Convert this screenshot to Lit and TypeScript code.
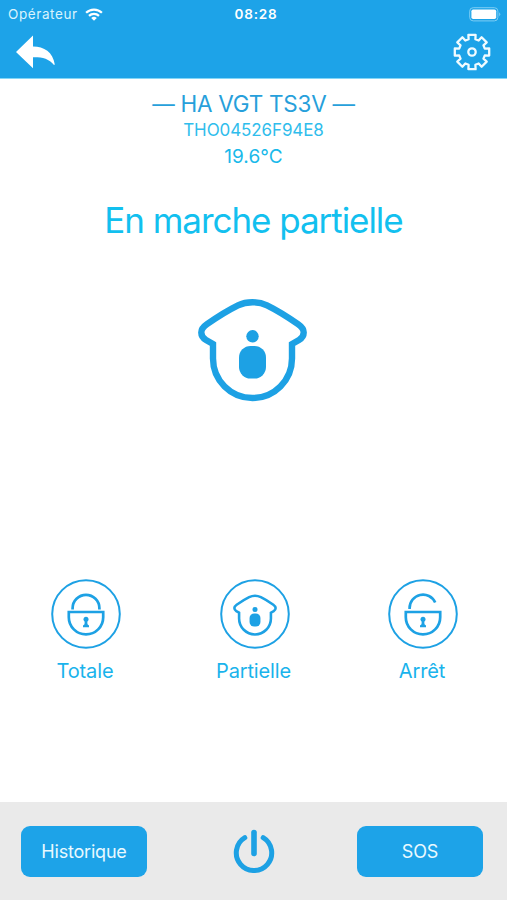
import { LitElement, html, svg, css } from "lit";
import { customElement, property } from "lit/decorators.js";

const houseShape = svg`
  <path d="M28 59 L21 55 C17.5 53 16.3 51 16.3 47.5 C16.3 44 18.5 41.6 22 39.2 C33 31.5 42 25.8 53 20.4 C61.5 16.2 73.5 16.2 82 20.4 C93 25.8 102 31.5 113 39.2 C116.5 41.6 118.7 44 118.7 47.5 C118.7 51 117.5 53 114 55 L107 59 V73.5 A39.5 39.5 0 0 1 28 73.5 Z"
    fill="none" stroke="currentColor" stroke-width="6.4" stroke-linejoin="miter"/>
  <circle cx="67.5" cy="51.3" r="6.2" fill="currentColor"/>
  <rect x="54" y="61" width="27" height="32.5" rx="11.5" fill="currentColor"/>`;

const lockBody = svg`
  <path d="M17.8 33 H52.2 V38.2 A17.2 17.2 0 0 1 17.8 38.2 Z" fill="none" stroke="currentColor" stroke-width="2.7"/>
  <circle cx="35" cy="40.3" r="2.5" fill="currentColor"/>
  <path d="M33.9 40 H36.1 L36.5 45.3 L38 46.5 V48.3 H32 V46.5 L33.5 45.3 Z" fill="currentColor"/>`;

const glyphs = {
  total: svg`<path d="M21.6 30.5 V29.3 A13.4 13.4 0 0 1 48.4 29.3 V30.5" fill="none" stroke="currentColor" stroke-width="2.7"/>${lockBody}`,
  partial: svg`<g transform="translate(7.8 9.9) scale(.403)">${houseShape}</g>`,
  off: svg`<path d="M21.6 30 V29.3 A13.4 13.4 0 0 1 47.2 23.5" fill="none" stroke="currentColor" stroke-width="2.7"/>${lockBody}`,
};

function gearPath(teeth: number, root: number, tip: number): string {
  const points: string[] = [];
  for (let i = 0; i < teeth; i++) {
    const a = (i * 2 * Math.PI) / teeth;
    const corners = [[-3.4, root], [-3.6, tip], [3.6, tip], [3.4, root]];
    for (const [side, out] of corners) {
      const x = 20 + side * Math.cos(a) + out * Math.sin(a);
      const y = 20 + side * Math.sin(a) - out * Math.cos(a);
      points.push(`${x.toFixed(2)} ${y.toFixed(2)}`);
    }
  }
  return `M${points.join("L")}Z`;
}

@customElement("mode-button")
class ModeButton extends LitElement {
  @property() label = "";
  @property() mode: keyof typeof glyphs = "total";

  static styles = css`
    :host { display: flex; flex-direction: column; align-items: center; width: 120px; }
    svg { display: block; width: 70px; height: 70px; color: #1da1e4; }
    .label { margin: 9px 2px 0 0; font-size: 20px; line-height: 26px; color: #19b3ec; letter-spacing: -.15px; }
  `;

  render() {
    return html`
      <svg viewBox="0 0 70 70">
        <circle cx="35" cy="35" r="33.8" fill="none" stroke="currentColor" stroke-width="2"/>
        ${glyphs[this.mode]}
      </svg>
      <span class="label">${this.label}</span>`;
  }
}

@customElement("app-root")
class AppRoot extends LitElement {
  static styles = css`
    :host {
      display: flex; flex-direction: column; width: 507px; height: 900px;
      background: #fff; font-family: Inter, "Liberation Sans", sans-serif; overflow: hidden;
    }
    svg { display: block; }
    header { background: #1da3e8; color: #fff; height: 78px; border-bottom: 1px solid #83d6f7; flex: none; }
    .status { display: grid; grid-template-columns: 1fr auto 1fr; align-items: center; height: 28px; padding: 0 6px 0 8px; font-size: 13.5px; }
    .carrier { display: flex; align-items: center; gap: 7px; color: #d9f3fd; letter-spacing: .6px; }
    .clock { font-weight: 600; letter-spacing: .8px; padding-left: 3px; }
    .battery { justify-self: end; }
    .nav { display: flex; justify-content: space-between; align-items: center; height: 48px; padding: 0 15px 0 16px; }
    main { flex: 1; display: flex; flex-direction: column; align-items: center; }
    .name { margin-top: 11px; font-size: 22.5px; line-height: 28px; color: #279fdb; letter-spacing: -.25px; white-space: nowrap; }
    .serial { font-size: 17px; line-height: 24px; color: #2fbdec; letter-spacing: -.1px; }
    .temp { margin-top: 1px; font-size: 19px; line-height: 27px; color: #19b9ea; letter-spacing: .1px; }
    .state { margin-top: 26px; font-size: 35px; line-height: 48px; color: #12c0ef; letter-spacing: -1.05px; white-space: nowrap; }
    .house { margin: 41px 2px 0 0; color: #1da1e4; }
    .modes { align-self: stretch; display: flex; justify-content: space-between; padding: 0 24px 0 26px; margin-top: 164px; }
    footer { flex: none; height: 98px; background: #eaeaea; display: grid; grid-template-columns: 126px 1fr 126px; align-items: center; padding: 0 24px 0 21px; }
    button { width: 126px; height: 51px; border: 0; border-radius: 9px; background: #1da3e8; color: #e9f9ff; font: 18px Inter, "Liberation Sans", sans-serif; padding: 0; letter-spacing: -.2px; }
    .power { color: #1da1e4; justify-self: center; margin-left: 4px; }
  `;

  render() {
    return html`
      <header>
        <div class="status">
          <div class="carrier">
            <span>Opérateur</span>
            <svg width="18" height="13" viewBox="0 0 18 13" fill="none" stroke="#fff" stroke-width="2.2">
              <path d="M1.1 4.8 A11.3 11.3 0 0 1 16.9 4.8"/>
              <path d="M4 7.9 A7.2 7.2 0 0 1 14 7.9"/>
              <path d="M9 12.8 L6.2 10 A4 4 0 0 1 11.8 10 Z" fill="#fff" stroke="none"/>
            </svg>
          </div>
          <span class="clock">08:28</span>
          <svg class="battery" width="32" height="15" viewBox="0 0 32 15">
            <rect x=".7" y=".7" width="28.2" height="13.2" rx="3.5" fill="none" stroke="#7dcdf4" stroke-width="1"/>
            <rect x="2.4" y="2.5" width="24.8" height="9.6" rx="1.8" fill="#fff"/>
            <path d="M30.2 5.2 Q32.3 7.3 30.2 9.4 Z" fill="#7dcdf4"/>
          </svg>
        </div>
        <div class="nav">
          <svg width="40" height="34" viewBox="0 0 40 34" fill="#fff">
            <path d="M0 17 L17 .5 V11.5 C28 11.5 37 17 38.8 29.5 L38 30 C33 23.5 26 22 17 22.2 V33.3 Z"/>
          </svg>
          <svg width="40" height="40" viewBox="0 0 40 40" fill="none" stroke="#f0fbff" stroke-width="2.3" stroke-linejoin="round">
            <path d=${gearPath(8, 12.8, 17.2)}/>
            <circle cx="20" cy="20" r="3.7"/>
          </svg>
        </div>
      </header>
      <main>
        <div class="name">— HA VGT TS3V —</div>
        <div class="serial">THO04526F94E8</div>
        <div class="temp">19.6°C</div>
        <div class="state">En marche partielle</div>
        <svg class="house" width="135" height="130" viewBox="0 0 135 130">${houseShape}</svg>
        <div class="modes">
          <mode-button label="Totale" mode="total"></mode-button>
          <mode-button label="Partielle" mode="partial"></mode-button>
          <mode-button label="Arrêt" mode="off"></mode-button>
        </div>
      </main>
      <footer>
        <button>Historique</button>
        <svg class="power" width="44" height="44" viewBox="0 0 44 44" fill="none" stroke="currentColor" stroke-width="5" stroke-linecap="round">
          <path d="M12.8 8.7 A17.7 17.7 0 1 0 31.2 8.7"/>
          <path d="M22 3.5 V24.5" stroke-width="5.6"/>
        </svg>
        <button>SOS</button>
      </footer>`;
  }
}
